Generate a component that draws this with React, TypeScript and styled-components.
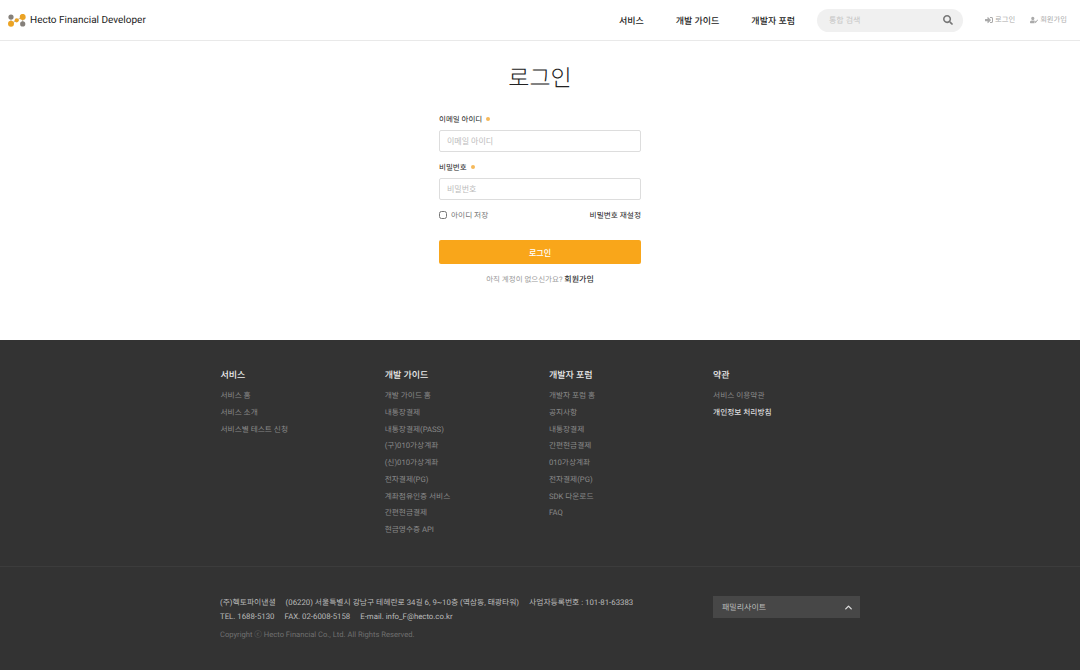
import styled, { createGlobalStyle } from "styled-components";
import { FaSearch, FaSignInAlt, FaUserEdit } from "react-icons/fa";
import { FiChevronUp } from "react-icons/fi";

const GlobalStyle = createGlobalStyle`
  html, body {
    margin: 0;
    padding: 0;
    background: #fff;
    font-family: Roboto, "Noto Sans CJK KR", sans-serif;
    text-rendering: geometricPrecision;
  }
  * {
    box-sizing: border-box;
  }
`;

const Header = styled.header`
  height: 41px;
  display: flex;
  align-items: center;
  padding: 0 13px 0 8px;
  border-bottom: 1px solid #e9e9e9;
`;

const Logo = styled.div`
  display: flex;
  align-items: center;
  gap: 4px;
  font-size: 10px;
  font-weight: 400;
  color: #222;
`;

const Nav = styled.nav`
  margin-left: auto;
  display: flex;
  gap: 32px;
  font-size: 9px;
  font-weight: 500;
  color: #222;
`;

const Search = styled.div`
  width: 146px;
  height: 23px;
  margin-left: 22px;
  padding: 0 10px 0 12px;
  border-radius: 12px;
  background: #f0f0f0;
  display: flex;
  align-items: center;
  justify-content: space-between;
  font-size: 8px;
  color: #c4c4c4;

  svg {
    color: #777;
    font-size: 10px;
  }
`;

const UserLinks = styled.div`
  margin-left: 22px;
  display: flex;
  gap: 15px;
`;

const UserLink = styled.a`
  display: flex;
  align-items: center;
  gap: 2px;
  font-size: 7.3px;
  color: #aaa;

  svg {
    font-size: 8px;
  }
`;

const Main = styled.main`
  height: 299px;
  display: flex;
  flex-direction: column;
  align-items: center;
`;

const Title = styled.h1`
  margin: 20px 0 0;
  font-size: 23px;
  line-height: 36px;
  font-weight: 300;
  color: #222;
`;

const Form = styled.form`
  width: 202px;
  margin-top: 16px;
  display: flex;
  flex-direction: column;
`;

const Label = styled.label`
  height: 12px;
  margin-bottom: 5px;
  display: flex;
  align-items: center;
  gap: 4px;
  font-size: 7.5px;
  font-weight: 400;
  color: #222;

  &::after {
    content: "";
    width: 4px;
    height: 4px;
    border-radius: 50%;
    background: #f5b95a;
  }
`;

const Input = styled.input`
  width: 100%;
  height: 22px;
  margin-bottom: 9px;
  padding: 0 7px;
  border: 1px solid #ddd;
  border-radius: 2px;
  font-family: inherit;
  font-size: 8px;
  outline: none;

  &::placeholder {
    color: #bbb;
  }
`;

const OptionRow = styled.div`
  height: 12px;
  display: flex;
  align-items: center;
  justify-content: space-between;
  font-size: 7.7px;
`;

const Remember = styled.label`
  display: flex;
  align-items: center;
  gap: 4px;
  color: #777;
`;

const Check = styled.input`
  width: 8px;
  height: 8px;
  margin: 0;
`;

const ResetLink = styled.a`
  color: #222;
  font-weight: 400;
`;

const SubmitButton = styled.button`
  height: 24px;
  margin-top: 19px;
  border: none;
  border-radius: 2px;
  background: #f9a61a;
  color: #fff;
  font-family: inherit;
  font-size: 8px;
  font-weight: 500;
`;

const SignupLine = styled.p`
  margin: 10px 0 0;
  text-align: center;
  font-size: 7.5px;
  color: #999;

  a {
    color: #333;
    font-weight: 500;
    font-size: 8px;
  }
`;

const Footer = styled.footer`
  height: 330px;
  background: #333;
`;

const FooterLinks = styled.div`
  height: 227px;
  padding: 27px 0 0 220.5px;
  display: grid;
  grid-template-columns: repeat(4, 164.2px);
  align-content: start;
  border-bottom: 1px solid #3c3c3c;
`;

const Column = styled.div`
  display: flex;
  flex-direction: column;
`;

const ColumnTitle = styled.div`
  height: 16px;
  margin: 1px 0 4px;
  font-size: 9px;
  line-height: 16px;
  font-weight: 500;
  color: #eee;
`;

const ColumnLink = styled.a<{ $strong?: boolean }>`
  height: 16.75px;
  font-size: 7.7px;
  line-height: 16.75px;
  color: ${(p) => (p.$strong ? "#ddd" : "#8a8a8a")};
  font-weight: ${(p) => (p.$strong ? 500 : 400)};
`;

const FooterBottom = styled.div`
  padding: 29px 0 0 220px;
  display: flex;
`;

const Company = styled.div`
  width: 493px;
  display: flex;
  flex-direction: column;
  font-size: 7.8px;
  line-height: 14px;
  color: #bbb;
`;

const CompanyRow = styled.div`
  display: flex;
  gap: 10px;
`;

const Copyright = styled.div`
  margin-top: 4px;
  font-size: 7.6px;
  color: #707070;
`;

const FamilySite = styled.div`
  width: 147px;
  height: 22px;
  padding: 0 6px 0 9px;
  background: #474747;
  display: flex;
  align-items: center;
  justify-content: space-between;
  font-size: 8px;
  color: #bbb;

  svg {
    font-size: 11px;
    color: #ddd;
    stroke-width: 3;
  }
`;

const LogoMark = () => (
  <svg width="18" height="13" viewBox="0 0 18 13">
    <path d="M3 3 V9.7 M3 9.7 L8.7 6.3 M8.7 6.3 L14.7 2.7 M14.7 2.7 V9.7" stroke="#a89878" strokeWidth="0.7" fill="none" />
    <circle cx="3" cy="3" r="2.6" fill="#85807a" />
    <circle cx="3" cy="9.7" r="3" fill="#eba324" />
    <circle cx="8.7" cy="6.3" r="2.1" fill="#eba324" />
    <circle cx="14.7" cy="2.9" r="3" fill="#eba324" />
    <circle cx="14.7" cy="9.9" r="2.6" fill="#85807a" />
  </svg>
);

const columns = [
  { title: "서비스", links: ["서비스 홈", "서비스 소개", "서비스별 테스트 신청"] },
  {
    title: "개발 가이드",
    links: [
      "개발 가이드 홈",
      "내통장결제",
      "내통장결제(PASS)",
      "(구)010가상계좌",
      "(신)010가상계좌",
      "전자결제(PG)",
      "계좌점유인증 서비스",
      "간편현금결제",
      "현금영수증 API",
    ],
  },
  {
    title: "개발자 포럼",
    links: ["개발자 포럼 홈", "공지사항", "내통장결제", "간편현금결제", "010가상계좌", "전자결제(PG)", "SDK 다운로드", "FAQ"],
  },
  { title: "약관", links: ["서비스 이용약관", "개인정보 처리방침"] },
];

export default function App() {
  return (
    <>
      <GlobalStyle />
      <Header>
        <Logo>
          <LogoMark />
          Hecto Financial Developer
        </Logo>
        <Nav>
          <span>서비스</span>
          <span>개발 가이드</span>
          <span>개발자 포럼</span>
        </Nav>
        <Search>
          통합 검색
          <FaSearch />
        </Search>
        <UserLinks>
          <UserLink>
            <FaSignInAlt />
            로그인
          </UserLink>
          <UserLink>
            <FaUserEdit />
            회원가입
          </UserLink>
        </UserLinks>
      </Header>
      <Main>
        <Title>로그인</Title>
        <Form>
          <Label>이메일 아이디</Label>
          <Input placeholder="이메일 아이디" />
          <Label>비밀번호</Label>
          <Input placeholder="비밀번호" type="password" />
          <OptionRow>
            <Remember>
              <Check type="checkbox" />
              아이디 저장
            </Remember>
            <ResetLink>비밀번호 재설정</ResetLink>
          </OptionRow>
          <SubmitButton type="button">로그인</SubmitButton>
          <SignupLine>
            아직 계정이 없으신가요? <a>회원가입</a>
          </SignupLine>
        </Form>
      </Main>
      <Footer>
        <FooterLinks>
          {columns.map((col) => (
            <Column key={col.title}>
              <ColumnTitle>{col.title}</ColumnTitle>
              {col.links.map((link) => (
                <ColumnLink key={link} $strong={link === "개인정보 처리방침"}>
                  {link}
                </ColumnLink>
              ))}
            </Column>
          ))}
        </FooterLinks>
        <FooterBottom>
          <Company>
            <CompanyRow>
              <span>(주)헥토파이낸셜</span>
              <span>(06220) 서울특별시 강남구 테헤란로 34길 6, 9~10층 (역삼동, 태광타워)</span>
              <span>사업자등록번호 : 101-81-63383</span>
            </CompanyRow>
            <CompanyRow>
              <span>TEL. 1688-5130</span>
              <span>FAX. 02-6008-5158</span>
              <span>E-mail. info_F@hecto.co.kr</span>
            </CompanyRow>
            <Copyright>Copyright ⓒ Hecto Financial Co., Ltd. All Rights Reserved.</Copyright>
          </Company>
          <FamilySite>
            패밀리사이트
            <FiChevronUp />
          </FamilySite>
        </FooterBottom>
      </Footer>
    </>
  );
}
